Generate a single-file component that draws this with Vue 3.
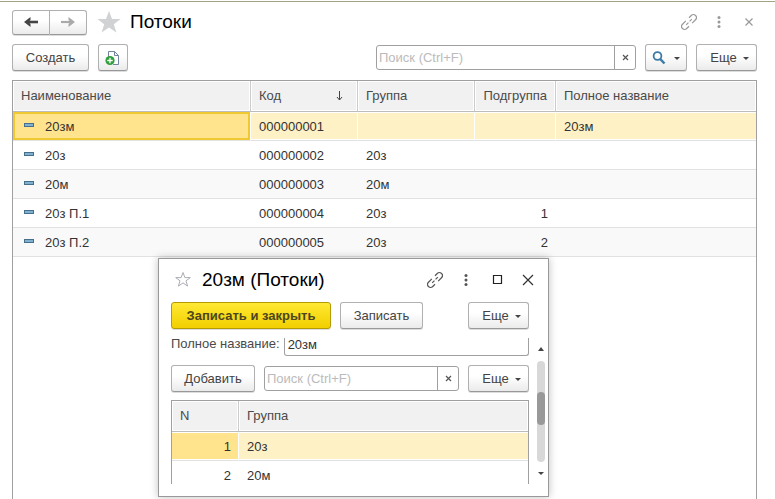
<script setup>
import { ref } from 'vue'

const query = ref('')
const groupQuery = ref('')
const fullName = ref('20зм')

const streams = [
  { name: '20зм', code: '000000001', group: '', sub: '', full: '20зм' },
  { name: '20з', code: '000000002', group: '20з', sub: '', full: '' },
  { name: '20м', code: '000000003', group: '20м', sub: '', full: '' },
  { name: '20з П.1', code: '000000004', group: '20з', sub: '1', full: '' },
  { name: '20з П.2', code: '000000005', group: '20з', sub: '2', full: '' }
]
const groups = ['20з', '20м']
</script>

<template>
  <main class="page">
    <header class="titlebar">
      <div class="history">
        <button class="btn nav" aria-label="Назад">
          <svg width="14" height="10" viewBox="0 0 14 10"><path d="M14 5H4" fill="none" stroke="#444" stroke-width="2.600" /><path d="M6.500 0v3L4.500 5l2 2v3L0 5z" fill="#444" /></svg>
        </button>
        <button class="btn nav" aria-label="Вперед">
          <svg width="14" height="10" viewBox="0 0 14 10"><path d="M0 5h10" fill="none" stroke="#aaa" stroke-width="2.200" /><path d="M7.500 0v3l2 2-2 2v3L14 5z" fill="#aaa" /></svg>
        </button>
      </div>
      <button class="icon star" aria-label="Избранное">
        <svg width="24" height="22" viewBox="0 0 24 22"><path d="M12 0l3 8h8.600l-6.800 5.200 2.600 8.300L12 16.500l-7.400 5 2.600-8.300L.4 8H9z" fill="#d0d2d4" /></svg>
      </button>
      <h1>Потоки</h1>
      <div class="window-tools muted">
        <button class="icon" aria-label="Ссылка">
          <svg width="16" height="16" viewBox="0 0 16 16" fill="none" stroke="currentColor" stroke-width="1.200"><g transform="translate(8 8) rotate(-45)"><path d="M-1.500 -3H-6.200a3 3 0 0 0 0 6H-3M1.500 3H6.200a3 3 0 0 0 0-6H3M-4 0H-.8M.8 0H4" /></g></svg>
        </button>
        <button class="icon" aria-label="Меню">
          <svg width="16" height="16" viewBox="0 0 16 16" fill="currentColor"><circle cx="8" cy="3.500" r="1.500" /><circle cx="8" cy="8" r="1.500" /><circle cx="8" cy="12.500" r="1.500" /></svg>
        </button>
        <button class="icon" aria-label="Закрыть">
          <svg width="16" height="16" viewBox="0 0 16 16" fill="none" stroke="currentColor" stroke-width="1.200"><path d="M4.500 4.500l7 7M11.500 4.500l-7 7" /></svg>
        </button>
      </div>
    </header>

    <div class="toolbar">
      <button class="btn create">Создать</button>
      <button class="btn copy" aria-label="Создать копированием">
        <svg width="16" height="16" viewBox="0 0 16 16"><path d="M3.500 8V1.500h6l4 4v9H8" fill="#fff" stroke="#7183a0" /><path d="M9.500 1.500v4h4" fill="none" stroke="#7183a0" /><circle cx="5" cy="10.500" r="4.600" fill="#2f9e3b" /><path d="M5 7.800v5.400M2.300 10.500h5.400" stroke="#fff" stroke-width="1.300" /></svg>
      </button>
      <div class="search main-search">
        <input v-model="query" type="text" placeholder="Поиск (Ctrl+F)" aria-label="Поиск" />
        <button aria-label="Очистить" @click="query = ''">
          <svg width="7" height="7" viewBox="0 0 7 7"><path d="M1 1l5 5M6 1L1 6" stroke="#555" stroke-width="1.200" /></svg>
        </button>
      </div>
      <button class="btn find" aria-label="Найти">
        <svg width="14" height="14" viewBox="0 0 14 14" fill="none" stroke="#3a7ca8"><circle cx="5.500" cy="5" r="3.900" stroke-width="1.800" /><path d="M8.200 8l4.300 4.500" stroke-width="2.500" /></svg>
        <span class="caret"></span>
      </button>
      <button class="btn more">Еще<span class="caret"></span></button>
    </div>

    <section class="list">
      <table class="grid">
        <colgroup>
          <col class="c-name" /><col class="c-code" /><col class="c-group" /><col class="c-sub" /><col />
        </colgroup>
        <thead>
          <tr>
            <th>Наименование</th>
            <th>
              <div class="sorted">Код
                <svg width="7" height="10" viewBox="0 0 7 10"><path d="M3.500 0v9M1 6l2.500 3L6 6" fill="none" stroke="#444" /></svg>
              </div>
            </th>
            <th>Группа</th>
            <th class="num">Подгруппа</th>
            <th>Полное название</th>
          </tr>
        </thead>
        <tbody>
          <tr v-for="(s, i) in streams" :key="s.code" :class="{ selected: i === 0 }">
            <td :class="{ current: i === 0 }"><div class="named"><i class="dash"></i>{{ s.name }}</div></td>
            <td>{{ s.code }}</td>
            <td>{{ s.group }}</td>
            <td class="num">{{ s.sub }}</td>
            <td>{{ s.full }}</td>
          </tr>
        </tbody>
      </table>
    </section>

    <section class="dialog" role="dialog" aria-labelledby="dialog-title">
      <header class="dialog-title">
        <button class="icon" aria-label="Избранное">
          <svg width="18" height="17" viewBox="0 0 18 17"><path d="M9 1.500l1.900 5.100h5.400L12 9.800l1.600 5.300L9 11.900l-4.600 3.200L6 9.800 1.700 6.600h5.400z" fill="#fff" stroke="#a9adb3" /></svg>
        </button>
        <h2 id="dialog-title">20зм (Потоки)</h2>
        <div class="window-tools">
          <button class="icon" aria-label="Ссылка">
            <svg width="16" height="16" viewBox="0 0 16 16" fill="none" stroke="currentColor" stroke-width="1.200"><g transform="translate(8 8) rotate(-45)"><path d="M-1.500 -3H-6.200a3 3 0 0 0 0 6H-3M1.500 3H6.200a3 3 0 0 0 0-6H3M-4 0H-.8M.8 0H4" /></g></svg>
          </button>
          <button class="icon" aria-label="Меню">
            <svg width="16" height="16" viewBox="0 0 16 16" fill="currentColor"><circle cx="8" cy="3.500" r="1.500" /><circle cx="8" cy="8" r="1.500" /><circle cx="8" cy="12.500" r="1.500" /></svg>
          </button>
          <button class="icon" aria-label="Развернуть">
            <svg width="16" height="16" viewBox="0 0 16 16"><path d="M4.500 3.500h8v8h-8z" fill="none" stroke="#222" stroke-width="1.200" /></svg>
          </button>
          <button class="icon" aria-label="Закрыть">
            <svg width="16" height="16" viewBox="0 0 16 16"><path d="M3 3l10 10M13 3L3 13" stroke="#333" stroke-width="1.200" /></svg>
          </button>
        </div>
      </header>
      <div class="commands">
        <button class="btn primary">Записать и закрыть</button>
        <button class="btn save">Записать</button>
        <button class="btn more push">Еще<span class="caret"></span></button>
      </div>
      <div class="scroller">
        <div class="form">
          <div class="field">
            <label for="full-name">Полное название:</label>
            <input id="full-name" v-model="fullName" type="text" />
          </div>
          <div class="commands inner">
            <button class="btn add">Добавить</button>
            <div class="search group-search">
              <input v-model="groupQuery" type="text" placeholder="Поиск (Ctrl+F)" aria-label="Поиск группы" />
              <button aria-label="Очистить" @click="groupQuery = ''">
                <svg width="7" height="7" viewBox="0 0 7 7"><path d="M1 1l5 5M6 1L1 6" stroke="#555" stroke-width="1.200" /></svg>
              </button>
            </div>
            <button class="btn more">Еще<span class="caret"></span></button>
          </div>
          <div class="sublist">
            <table class="grid">
              <colgroup><col class="c-n" /><col /></colgroup>
              <thead><tr><th>N</th><th>Группа</th></tr></thead>
              <tbody>
                <tr v-for="(g, i) in groups" :key="g" :class="{ selected: i === 0 }">
                  <td class="num" :class="{ active: i === 0 }">{{ i + 1 }}</td>
                  <td>{{ g }}</td>
                </tr>
              </tbody>
            </table>
          </div>
        </div>
        <div class="scrollbar">
          <span class="caret up"></span>
          <div class="track"><div class="thumb"></div></div>
          <span class="caret"></span>
        </div>
      </div>
    </section>
  </main>
</template>

<style>
body { background: #fff; }
</style>

<style scoped>
* { box-sizing: border-box; }
.page {
  position: relative;
  display: flex;
  flex-direction: column;
  height: 100vh;
  padding: 9px 18px 0 12px;
  overflow: hidden;
  font: 13px/16px "Liberation Sans", Arial, sans-serif;
  color: #333;
  background: linear-gradient(#a3a484, #a3a484) 0 1px / 100% 1px no-repeat #fff;
}
button, input { font: inherit; color: inherit; }
h1, h2 { margin: 0; font-size: 19px; line-height: 24px; font-weight: 400; color: #000; }
svg { display: block; flex: none; }

.btn {
  display: flex;
  align-items: center;
  justify-content: center;
  height: 27px;
  padding: 0;
  border: 1px solid #b0b0b0;
  border-bottom-color: #989898;
  border-radius: 3px;
  background: linear-gradient(#fff 40%, #ebebeb);
  box-shadow: 0 1px 0 #ddd;
  color: #444;
  flex: none;
}
.icon { display: flex; padding: 0; border: 0; background: none; }
.caret {
  border: 3px solid transparent;
  border-top-color: #444;
  border-bottom-width: 0;
}
.btn .caret { margin-top: 2px; }
.caret.up { border-top-width: 0; border-bottom: 4px solid #444; }

.titlebar { display: flex; align-items: center; height: 26px; }
.history { display: flex; }
.nav { width: 37px; height: 25px; }
.nav:first-child { width: 38px; border-radius: 3px 0 0 3px; }
.nav:last-child { border-left: 0; border-radius: 0 3px 3px 0; }
.star { margin: 0 9px 0 10px; }
.window-tools { display: flex; gap: 15px; margin-left: auto; color: #555; }
.muted { gap: 14px; color: #999; }

.toolbar { display: flex; align-items: center; gap: 9px; margin-top: 9px; }
.create { width: 77px; }
.copy { width: 30px; }
.find { width: 42px; gap: 8px; }
.more { width: 61px; gap: 6px; padding-left: 6px; }
.search {
  display: flex;
  height: 25px;
  border: 1px solid #a0a0a0;
  border-radius: 3px;
  background: #fff;
}
.search input {
  flex: 1;
  min-width: 0;
  padding: 0 2px;
  border: 0;
  outline: 0;
  background: none;
}
.search input::placeholder { color: #bbb; opacity: 1; }
.search button {
  display: flex;
  align-items: center;
  justify-content: center;
  width: 21px;
  padding: 0;
  border: 0;
  border-left: 1px solid #a0a0a0;
  background: none;
}
.main-search { width: 260px; margin-left: auto; }

.list { flex: 1; margin-top: 9px; border: 1px solid #a0a0a0; border-bottom: 0; }
.grid { width: 100%; border-collapse: separate; border-spacing: 0; table-layout: fixed; }
.c-name { width: 238px; }
.c-code { width: 107px; }
.c-group { width: 117px; }
.c-sub { width: 81px; }
.c-n { width: 67px; }
th, td { padding: 0 8px; text-align: left; font-weight: 400; white-space: nowrap; }
th {
  height: 31px;
  border-right: 1px solid #ccc;
  border-bottom: 1px solid #bbb;
  background: #f1f1f1;
  box-shadow: inset 0 0 0 1px #fff;
  color: #4a4a4a;
}
td { height: 29px; padding-top: 2px; border-bottom: 1px solid #e2e2e2; }
th:last-child { border-right: 0; }
.num { text-align: right; }
tbody tr:nth-child(odd):not(.selected) td { background: #f9f9f9; }
.selected td {
  border-right: 1px solid #fff;
  background: #fef1c5;
  box-shadow: inset 0 1px #fff, inset 0 -1px #fff;
}
.selected td.num { padding-right: 7px; }
.selected td:last-child { border-right: 0; }
.selected td.current { background: #ffe48d; box-shadow: inset 0 0 0 2px #f0c932; }
.selected td.active { background: #ffe48d; }
.sorted { display: flex; align-items: center; justify-content: space-between; padding-right: 6px; }
.named { display: flex; align-items: center; gap: 11px; padding-left: 3px; }
.dash { width: 10px; height: 4px; margin-bottom: 4px; border: 1px solid #466f8c; background: #7fb0d0; }

.dialog {
  position: absolute;
  left: 158px;
  top: 258px;
  width: 391px;
  padding: 0 3px 12px 12px;
  border: 1px solid #999;
  background: #fff;
  box-shadow: 0 0 8px rgba(0, 0, 0, 0.25);
}
.dialog-title { display: flex; align-items: center; gap: 10px; height: 43px; padding: 0 9px 2px 3px; }
.commands { display: flex; align-items: center; gap: 9px; padding-right: 16px; }
.primary {
  width: 160px;
  border-color: #b39b00;
  background: linear-gradient(#ffe933, #f2cf00);
  font-weight: 700;
  color: #4d4620;
}
.save { width: 83px; }
.push { margin-left: auto; }
.scroller { display: flex; gap: 8px; height: 149px; margin-top: 6px; overflow: hidden; }
.form { flex: 1; min-width: 0; }
.field { display: flex; gap: 4px; height: 21px; }
.field label { line-height: 18px; color: #4a4a4a; }
.field input {
  flex: 1;
  min-width: 0;
  margin-top: 3px;
  padding: 0 3px 4px;
  border: 1px solid #a0a0a0;
  border-top: 0;
  border-radius: 0 0 3px 3px;
  outline: 0;
}
.inner { margin-top: 9px; padding-right: 0; }
.add { width: 84px; }
.group-search { flex: 1; min-width: 0; }
.sublist { margin-top: 8px; border: 1px solid #a0a0a0; border-bottom: 0; }
.scrollbar { display: flex; flex-direction: column; align-items: center; width: 8px; padding: 12px 0 9px; }
.track { flex: 1; width: 8px; margin: 10px 0; border-radius: 4px; background: #d8d8d8; }
.thumb { height: 33px; margin-top: 31px; border-radius: 4px; background: #999; }
</style>
